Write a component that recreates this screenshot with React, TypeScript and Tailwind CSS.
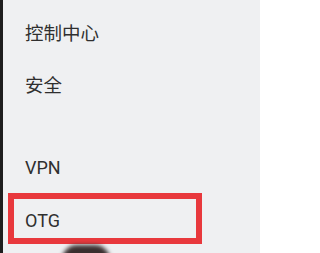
export default function App() {
  const font = { fontFamily: '"Roboto", "Noto Sans CJK SC", sans-serif' };
  return (
    <div className="relative flex w-[260px] h-[253px] overflow-hidden bg-[#eff0f2]" style={font}>
      <div className="w-[3px] shrink-0 bg-[#1e1e1e]" />
      <div className="flex flex-col flex-1 pt-[9px] text-[18.5px] text-[#2f2f2f]">
        <div className="h-[52px] flex items-center pl-[22px]">控制中心</div>
        <div className="h-[52px] flex items-center pl-[22px]">安全</div>
        <div className="h-[51px] mt-[29px] flex items-center pl-[22px] text-[18px]">VPN</div>
        <div className="ml-[5px] w-[194px] h-[51px] border-[6px] border-[#e8383d] flex items-center pl-[11px] pt-[3px] text-[18px]">
          OTG
        </div>
      </div>
      {/* thumb shadow at the bottom */}
      <div className="absolute left-[62px] top-[245px] w-[48px] h-[30px] rounded-full bg-[#3a2f2f] blur-[2px]" />
    </div>
  );
}
